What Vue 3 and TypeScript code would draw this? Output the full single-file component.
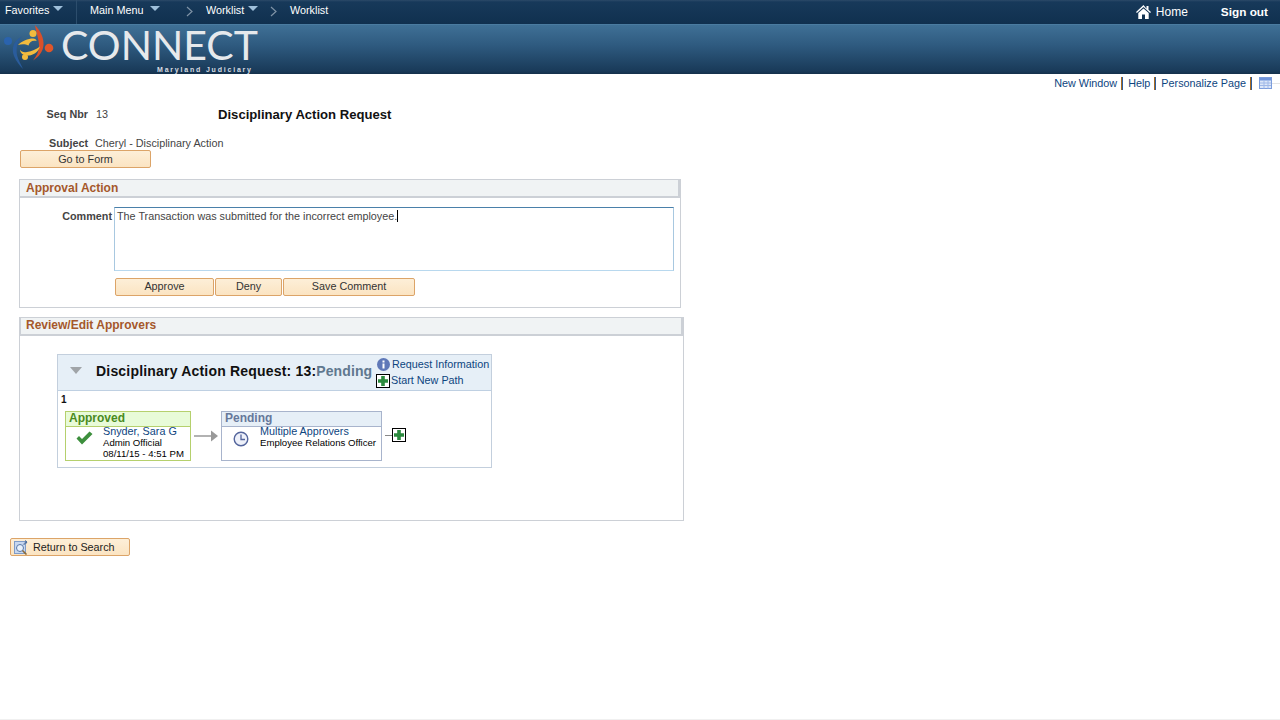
<script setup lang="ts">
const crumbs = ['Worklist'];
</script>

<template>
  <div class="page">
    <header class="topbar">
      <div class="nav-left">
        <span class="nav-item fav">Favorites<i class="tri"></i></span>
        <span class="nav-item main">Main Menu<i class="tri"></i></span>
        <svg class="chev c1" width="7" height="11" viewBox="0 0 7 11"><path d="M1 1l5 4.5-5 4.5" fill="none" stroke="#7f93a6" stroke-width="1.2"/></svg>
        <span class="nav-item wl">Worklist<i class="tri"></i></span>
        <svg class="chev c2" width="7" height="11" viewBox="0 0 7 11"><path d="M1 1l5 4.5-5 4.5" fill="none" stroke="#7f93a6" stroke-width="1.2"/></svg>
        <span class="nav-item wl2">{{ crumbs[0] }}</span>
      </div>
      <div class="nav-right">
        <svg class="home" width="15" height="14" viewBox="0 0 15 14"><path d="M7.500 0L0 7l.9.9L7.500 2l6.600 5.900.9-.9-2.500-2.300V1h-2v2.800z" fill="#fff"/><path d="M2.300 8L7.500 3.400 12.700 8v6H9V9.500H6V14H2.300z" fill="#fff"/></svg>
        <span class="home-text">Home</span>
        <span class="signout">Sign out</span>
      </div>
    </header>

    <div class="banner">
      <svg class="logo-mark" width="56" height="49" viewBox="2 25 56 49">
        <circle cx="8" cy="41" r="4" fill="#2a63ae"/>
        <path d="M22 36.500C14 40 11 48 14 56c2 5 6 10 9 13-2-5-5-9-6-14-1-7 0-13 5-18.500z" fill="#2a5c9c"/>
        <path d="M35 25c6 7 9 13 8.500 20-.5 7-5 12-10.500 15.500 3-4 6-8 6-15 0-7-3-13-4-20.500z" fill="#d8502a"/>
        <circle cx="49" cy="48" r="4.300" fill="#e0562a"/>
        <circle cx="33" cy="33.500" r="3.500" fill="#f2bb3e"/>
        <path d="M18 45c4-4 10-6.500 15-6.500 2 0 3.500 1 3.500 2.500-4-1-7 .5-8 4.500-3-1.500-7-1.500-10.500-.5z" fill="#f2bb3e"/>
        <path d="M20 49.500c1 2.500 4 3 7 2.500 5-1 9-2.500 13-5.500-1.500 5-6 8.500-11 9-5 .5-9-2-9-6z" fill="#f2bb3e"/>
        <circle cx="25" cy="57" r="3" fill="#f2bb3e"/>
      </svg>
      <div class="logo-text">
        <span class="connect">CONNECT</span>
        <span class="judiciary">Maryland Judiciary</span>
      </div>
    </div>

    <div class="util">
      <a class="u-link">New Window</a><i class="u-sep"></i>
      <a class="u-link">Help</a><i class="u-sep"></i>
      <a class="u-link">Personalize Page</a><i class="u-sep"></i>
      <svg class="u-grid" width="13" height="12" viewBox="0 0 13 12">
        <rect x=".5" y=".5" width="12" height="11" fill="#dbe6f8" stroke="#7c9ddc"/>
        <rect x="1" y="1" width="11" height="2.500" fill="#6f94dc"/>
        <path d="M1 6h11M1 8.500h11M5 3.500v8M9 3.500v8" stroke="#9fb8e8"/>
      </svg>
      <i class="u-tail"></i>
    </div>

    <main class="content">
      <div class="seq-row">
        <span class="lbl seq-lbl">Seq Nbr</span>
        <span class="val seq-val">13</span>
        <span class="title">Disciplinary Action Request</span>
      </div>
      <div class="subject-row">
        <span class="lbl sub-lbl">Subject</span>
        <span class="val">Cheryl - Disciplinary Action</span>
      </div>
      <button class="btn goto">Go to Form</button>

      <section class="panel approval">
        <h2 class="panel-head">Approval Action</h2>
        <div class="panel-body approval-body">
          <div class="comment-row">
            <span class="lbl comment-lbl">Comment</span>
            <div class="textarea">
              <span>The Transaction was submitted for the incorrect employee.</span><i class="caret"></i>
            </div>
          </div>
          <div class="actions">
            <button class="btn approve">Approve</button>
            <button class="btn deny">Deny</button>
            <button class="btn save">Save Comment</button>
          </div>
        </div>
      </section>

      <section class="panel review">
        <h2 class="panel-head">Review/Edit Approvers</h2>
        <div class="panel-body review-body">
          <div class="flow">
            <div class="flow-head">
              <i class="flow-tri"></i>
              <span class="flow-title">Disciplinary Action Request: 13:<span class="flow-status">Pending</span></span>
              <div class="flow-links">
                <div class="fl-row info-row">
                  <svg width="13" height="13" viewBox="0 0 13 13"><circle cx="6.500" cy="6.500" r="6.500" fill="#5f78b8"/><rect x="5.500" y="5.500" width="2" height="5" fill="#fff"/><rect x="5.500" y="2.500" width="2" height="2" fill="#fff"/></svg>
                  <a>Request Information</a>
                </div>
                <div class="fl-row path-row">
                  <span class="plus"><svg width="10" height="10" viewBox="0 0 10 10"><path d="M3.200 0h3.600v3.200H10v3.600H6.800V10H3.200V6.800H0V3.200h3.200z" fill="#2b8a3e"/></svg></span>
                  <a>Start New Path</a>
                </div>
              </div>
            </div>
            <div class="flow-body">
              <div class="step-num">1</div>
              <div class="steps">
                <div class="step approved">
                  <div class="step-head">Approved</div>
                  <div class="step-main">
                    <svg class="check" width="17" height="14" viewBox="0 0 17 14"><path d="M0.500 7.500l2.500-2.500 3 3L13.500 .5 16.500 3 6 13.500z" fill="#3d8f3d"/></svg>
                    <div class="step-lines">
                      <a>Snyder, Sara G</a>
                      <span>Admin Official</span>
                      <span>08/11/15 - 4:51 PM</span>
                    </div>
                  </div>
                </div>
                <svg class="arrow" width="24" height="12" viewBox="0 0 24 12"><path d="M0 6h17" stroke="#999" stroke-width="1.500"/><path d="M17 0.500L24 6l-7 5.500z" fill="#999"/></svg>
                <div class="step pending">
                  <div class="step-head">Pending</div>
                  <div class="step-main">
                    <svg class="clock" width="16" height="16" viewBox="0 0 16 16"><circle cx="8" cy="8" r="6.800" fill="#eef1fa" stroke="#54659c" stroke-width="1.400"/><path d="M8 3.500V8.500H12" fill="none" stroke="#54659c" stroke-width="1.300"/></svg>
                    <div class="step-lines">
                      <a>Multiple Approvers</a>
                      <span>Employee Relations Officer</span>
                    </div>
                  </div>
                </div>
                <i class="stub"></i>
                <span class="plus step-plus"><svg width="10" height="10" viewBox="0 0 10 10"><path d="M3.200 0h3.600v3.200H10v3.600H6.800V10H3.200V6.800H0V3.200h3.200z" fill="#2b8a3e"/></svg></span>
              </div>
            </div>
          </div>
        </div>
      </section>

      <button class="btn back">
        <svg width="16" height="15" viewBox="0 0 16 15">
          <rect x=".5" y="1.500" width="11" height="12" fill="#c8d8f0" stroke="#7f9cc8"/>
          <circle cx="6" cy="8" r="3.500" fill="#eaf2fb" stroke="#5878a8"/>
          <path d="M8.500 10.500l4 4" stroke="#8a6a3a" stroke-width="1.600"/>
          <path d="M10 5c0-2 1-3 3-3M13 2l-2-1.500M13 2l-1.500 2" fill="none" stroke="#4a6a98"/>
        </svg>
        <span>Return to Search</span>
      </button>
    </main>
    <div class="bottom-line"></div>
  </div>
</template>

<style>
html, body { margin: 0; background: #fff; }
</style>

<style scoped>
.page {
  position: relative;
  width: 1280px;
  height: 720px;
  overflow: hidden;
  font-family: "Liberation Sans", Arial, sans-serif;
  font-size: 10.8px;
  color: #333;
  background: #fff;
}
.topbar {
  height: 24px;
  box-sizing: border-box;
  display: flex;
  justify-content: space-between;
  background: linear-gradient(#2c4a68 0, #17395a 2px, #10304f 100%);
  color: #fff;
  font-size: 10.8px;
}
.nav-left { display: flex; height: 24px; }
.nav-item { display: inline-flex; height: 20px; align-items: flex-start; line-height: 20px; }
.tri {
  display: inline-block;
  width: 0;
  height: 0;
  border-left: 5px solid transparent;
  border-right: 5px solid transparent;
  border-top: 5px solid #9fc0db;
  margin-left: 4px;
  margin-top: 6px;
}
.fav { margin-left: 5px; width: 71px; border-right: 1px solid #2c4d6c; height: 24px; }
.main { margin-left: 13px; width: 82px; }
.main .tri { margin-left: 7px; }
.c1 { margin: 6px 0 0 14px; }
.wl { margin-left: 13px; width: 59px; }
.c2 { margin: 6px 0 0 5px; }
.wl2 { margin-left: 13px; }
.nav-right { display: flex; align-items: center; height: 24px; }
.home { margin-right: 5px; }
.home-text { font-size: 12px; width: 65px; }
.signout { font-size: 11.8px; font-weight: 700; margin-right: 12px; }

.banner {
  height: 50px;
  box-sizing: border-box;
  display: flex;
  background: linear-gradient(#3f7096 0, #2f5b80 40%, #193a59 94%, #14304b 100%);
  border-top: 1px solid #4a7ba0;
}
.logo-mark { margin: 0 0 0 2px; flex: none; }
.logo-text { position: relative; margin-left: 3px; }
.connect {
  display: block;
  margin-top: 1px;
  font-family: Lato, sans-serif;
  font-size: 41px;
  line-height: 38px;
  color: #e6e9ec;
  white-space: nowrap;
}
.judiciary {
  position: absolute;
  left: 96px;
  top: 41px;
  font-size: 7px;
  font-weight: 700;
  letter-spacing: 1.8px;
  line-height: 8px;
  color: #d8dde2;
  white-space: nowrap;
}

.util {
  height: 18px;
  display: flex;
  justify-content: flex-end;
  align-items: center;
}
.u-link { color: #0d4580; }
.u-sep { width: 2px; height: 13px; margin: 0 5px 0 4px; background: linear-gradient(90deg, #a86a20 50%, #2f5f9f 50%); }
.u-grid { margin-left: 2px; }
.u-tail { width: 8px; height: 1px; background: #e4e4e4; }

.lbl { font-weight: 700; color: #444; }
.val { color: #444; }
.seq-row { display: flex; align-items: center; height: 16px; margin-top: 14px; }
.seq-lbl { width: 88px; text-align: right; }
.seq-val { margin-left: 8px; width: 122px; }
.title { font-size: 13.1px; font-weight: 700; color: #111; }
.subject-row { display: flex; align-items: center; height: 14px; margin-top: 14px; }
.sub-lbl { width: 88px; text-align: right; }
.subject-row .val { margin-left: 7px; }

.btn {
  display: block;
  box-sizing: border-box;
  height: 18px;
  padding: 0;
  border: 1px solid #dca468;
  border-radius: 2px;
  background: linear-gradient(#fdefd8, #fbe4c2);
  font-family: inherit;
  font-size: 10.8px;
  color: #333;
  text-align: center;
}
.goto { width: 131px; margin: 0 0 0 20px; }

.panel { box-sizing: border-box; border: 1px solid #ccd0d6; border-top: 0; }
.panel-head {
  margin: 0;
  box-sizing: border-box;
  height: 19px;
  line-height: 16px;
  padding-left: 6px;
  background: #f0f3f4;
  border-top: 1px solid #ccd0d6;
  border-bottom: 2px solid #ccd0d6;
  border-right: 2px solid #ccd0d6;
  font-size: 12px;
  font-weight: 700;
  color: #a5582b;
}
.approval { width: 662px; margin: 11px 0 0 19px; }
.review { width: 665px; margin: 9px 0 0 19px; }
.review .panel-head { line-height: 14px; border-left: 1px solid #ccd0d6; padding-left: 5px; }
.approval-body { height: 109px; box-sizing: border-box; padding-top: 9px; }
.comment-row { display: flex; align-items: flex-start; }
.comment-lbl { width: 92px; text-align: right; margin-top: 3px; }
.textarea {
  box-sizing: border-box;
  width: 560px;
  height: 64px;
  margin-left: 2px;
  padding: 2px;
  border: 1px solid #a8c8e0;
  border-top: 1px solid #4a80aa;
  border-bottom: 1px solid #b8d8ee;
  color: #444;
  line-height: 13px;
}
.caret { display: inline-block; width: 1px; height: 12px; background: #000; vertical-align: -2px; }
.actions { display: flex; gap: 1px; margin: 7px 0 0 95px; }
.actions .btn { padding-bottom: 2px; }
.approve { width: 99px; }
.deny { width: 67px; }
.save { width: 132px; }

.review-body { height: 184px; box-sizing: border-box; padding: 18px 0 0 37px; }
.flow { width: 435px; height: 114px; box-sizing: border-box; border: 1px solid #c3cfdd; }
.flow-head {
  height: 35px;
  display: flex;
  background: #e6eff7;
  border-bottom: 1px solid #bfd0e2;
}
.flow-tri {
  width: 0;
  height: 0;
  border-left: 6px solid transparent;
  border-right: 6px solid transparent;
  border-top: 7px solid #a0a4a8;
  margin: 12px 0 0 12px;
}
.flow-title {
  margin: 8px 0 0 14px;
  font-size: 14px;
  font-weight: 700;
  line-height: 16px;
  color: #111;
  width: 281px;
  letter-spacing: .19px;
  white-space: nowrap;
}
.flow-status { color: #60788f; letter-spacing: .1px; }
.flow-links { color: #0d4580; }
.fl-row { display: flex; align-items: center; height: 16px; }
.info-row { margin-top: 1px; gap: 2px; }
.path-row { gap: 1px; margin-left: -1px; }
.path-row .plus { margin-top: 2px; }
.plus {
  display: inline-flex;
  align-items: center;
  justify-content: center;
  box-sizing: border-box;
  width: 14px;
  height: 14px;
  border: 1px solid #000;
  background: #fff;
  flex: none;
}
.flow-body { padding: 3px 0 0 3px; }
.step-num { font-size: 10px; font-weight: 700; color: #111; height: 17px; line-height: 12px; }
.steps { display: flex; align-items: flex-start; margin-left: 4px; }
.step { box-sizing: border-box; height: 50px; border: 1px solid #b0bccc; }
.step-head { height: 14px; line-height: 13px; font-size: 12px; font-weight: 700; padding-left: 3px; border-bottom: 1px solid currentColor; }
.approved { width: 126px; border-color: #b5d06d; }
.approved .step-head { background: #e8fbd8; color: #4a8a1e; border-bottom-color: #b5d06d; }
.pending { width: 161px; border-color: #a8b4cc; }
.pending .step-head { background: #e6eff7; color: #66789a; border-bottom-color: #a8b4cc; }
.step-main { display: flex; }
.check { margin: 4px 0 0 10px; flex: none; }
.clock { margin: 4px 0 0 11px; flex: none; }
.step-lines { display: flex; flex-direction: column; margin: -1px 0 0 11px; font-size: 9.6px; color: #000; line-height: 11px; white-space: nowrap; }
.approved .step-lines { margin-left: 10px; }
.step-lines a { font-size: 10.8px; color: #0d4580; line-height: 11px; }
.arrow { margin: 19px 3px 0 3px; flex: none; }
.stub { width: 7px; height: 1px; background: #888; margin: 24px 0 0 3px; }
.step-plus { margin-top: 17px; }

.back {
  display: flex;
  align-items: center;
  width: 120px;
  margin: 17px 0 0 10px;
  padding-left: 3px;
}
.back span { margin-left: 3px; color: #222; }
.bottom-line { position: absolute; left: 0; right: 0; bottom: 0; height: 1px; background: #f0f0f0; }
</style>
